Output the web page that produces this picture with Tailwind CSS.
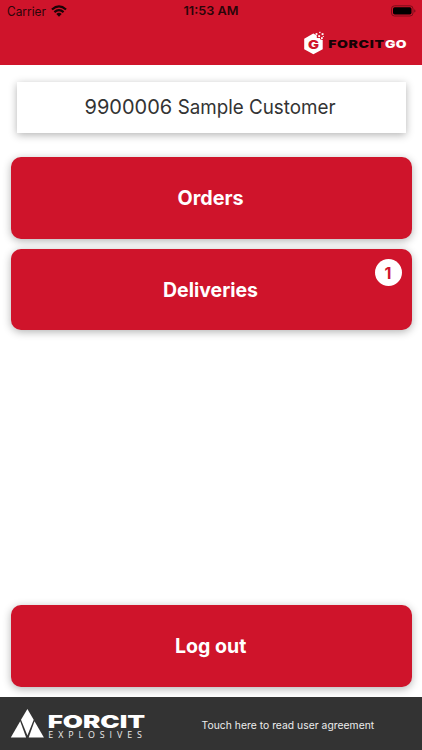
<!DOCTYPE html>
<html lang="en">
<head>
<meta charset="utf-8">
<title>Forcit GO</title>
<script src="https://cdn.jsdelivr.net/npm/@tailwindcss/browser@4"></script>
</head>
<body class="bg-white">
<div class="flex h-[750px] w-[422px] flex-col overflow-hidden bg-white font-['Inter',sans-serif]">
  <header class="h-[65px] shrink-0 bg-[#cf142b] text-[#2a0509]">
    <div class="grid h-[22px] grid-cols-3 items-center pl-[7px] pr-[6px]">
      <div class="flex items-center gap-[4px]">
        <svg class="h-4 w-[40px] overflow-visible" viewBox="0 0 40 16"><text x="0" y="12.6" font-size="12.4" fill="currentColor" textLength="39" lengthAdjust="spacingAndGlyphs">Carrier</text></svg>
        <svg class="h-[12px] w-[16px]" viewBox="0 0 15 11" fill="none" stroke="#1c0306" stroke-width="2.1"><path d="M.9 4.1Q7.5-1.7 14.1 4.1"/><path d="M3.2 6.6Q7.5 2.8 11.8 6.6"/><path d="M7.5 10.8 5 8.3Q7.5 6.2 10 8.3Z" fill="#1c0306" stroke="none"/></svg>
      </div>
      <svg class="h-4 w-[56px] justify-self-center overflow-visible" viewBox="0 0 56 16"><text x="0.4" y="12.4" font-size="12.4" font-weight="600" fill="currentColor" textLength="55" lengthAdjust="spacingAndGlyphs">11:53 AM</text></svg>
      <svg class="h-[12px] w-[26px] justify-self-end" viewBox="0 0 26 12"><rect x="1.5" y=".8" width="21.5" height="10.2" rx="3" fill="none" stroke="#7c0c1a" stroke-width="1"/><rect x="3" y="2.3" width="18.5" height="7.2" rx="1.7" fill="#000"/><path d="M24.2 4.2q1.3.5 1.3 1.7t-1.3 1.7z" fill="#7c0c1a"/></svg>
    </div>
    <div class="flex justify-end pr-[14px] pt-[7px]">
      <svg class="h-[28px] w-[105px] overflow-visible" viewBox="303 29 105 28">
        <path d="M313.3 33.5 316.8 35.5V38H320V39.2L322.7 40V49.2L313.4 54.3 304.2 49.2V38.7Z" fill="#fff"/>
        <g fill="#fff"><rect x="315.6" y="33.1" width="1.8" height="1.8"/><rect x="319.2" y="31.8" width="1.3" height="1.3"/><rect x="321.6" y="33.2" width="1.9" height="1.9"/><rect x="318.2" y="35.2" width="1.9" height="1.9"/><rect x="321" y="37.2" width="1.8" height="1.8"/><rect x="322.8" y="36" width="1" height="1"/></g>
        <text x="308" y="48.6" font-size="11.8" font-weight="900" fill="#cf142b" textLength="11" lengthAdjust="spacingAndGlyphs">G</text>
        <text x="328.2" y="48" font-size="10.7" font-weight="900" fill="#180205" textLength="56.5" lengthAdjust="spacingAndGlyphs" letter-spacing=".5">FORCIT</text>
        <text x="385" y="48" font-size="10.7" font-weight="900" fill="#fff" textLength="22" lengthAdjust="spacingAndGlyphs" letter-spacing=".3">GO</text>
      </svg>
    </div>
  </header>
  <main class="flex flex-1 flex-col px-[10.5px] pb-[10.5px] pt-[17px]">
    <div class="mx-[6px] flex h-[50.5px] items-center justify-center bg-white shadow-[0_2px_8px_rgba(0,0,0,0.3)]">
      <svg class="h-[30px] w-[254px] overflow-visible" viewBox="0 0 254 30"><text y="22" font-size="20" fill="#333"><tspan x="0.6" textLength="87.6" lengthAdjust="spacingAndGlyphs">9900006</tspan> <tspan x="93.8" textLength="66" lengthAdjust="spacingAndGlyphs">Sample</tspan> <tspan x="164.9" textLength="86.6" lengthAdjust="spacingAndGlyphs">Customer</tspan></text></svg>
    </div>
    <button class="mt-[24.5px] flex h-[81.5px] items-center justify-center rounded-[10px] bg-[#cf142b] shadow-[0_2px_8px_rgba(0,0,0,0.3)]">
      <svg class="h-[30px] w-[68px] overflow-visible" viewBox="0 0 68 30"><text x="0.6" y="22.4" font-size="20" font-weight="700" fill="#fff" textLength="66" lengthAdjust="spacingAndGlyphs">Orders</text></svg>
    </button>
    <button class="relative mt-[10.5px] flex h-[81px] items-center justify-center rounded-[10px] bg-[#cf142b] shadow-[0_2px_8px_rgba(0,0,0,0.3)]">
      <svg class="h-[30px] w-[98px] overflow-visible" viewBox="0 0 98 30"><text x="1" y="22.4" font-size="20" font-weight="700" fill="#fff" textLength="95" lengthAdjust="spacingAndGlyphs">Deliveries</text></svg>
      <span class="absolute right-[10px] top-[10px] flex size-[27px] items-center justify-center rounded-full bg-white text-[16px] font-bold leading-none text-[#cf142b]">1</span>
    </button>
    <button class="mt-auto flex h-[81.5px] items-center justify-center rounded-[10px] bg-[#cf142b] shadow-[0_2px_8px_rgba(0,0,0,0.3)]">
      <svg class="h-[30px] w-[72px] overflow-visible" viewBox="0 0 72 30"><text x="0" y="22.4" font-size="20" font-weight="700" fill="#fff" textLength="71.3" lengthAdjust="spacingAndGlyphs">Log out</text></svg>
    </button>
  </main>
  <footer class="relative flex h-[53px] shrink-0 items-center bg-[#333] pl-[10px]">
    <svg class="h-[36px] w-[136px] overflow-visible" viewBox="10 706 136 36" fill="#fff">
      <path d="M27.4 709 33.7 719.7 27.4 735.5 21 719.7Z"/><path d="M20.2 721.3 26.1 737.4H10.8Z"/><path d="M34.5 721.3 43.9 737.4H28.7Z"/>
      <text x="47.7" y="728" font-size="17.9" font-weight="900" textLength="97.5" lengthAdjust="spacingAndGlyphs">FORCIT</text>
      <text x="48.3" y="738.1" font-size="9" font-family="Open Sans, sans-serif" letter-spacing="5" textLength="98.5" lengthAdjust="spacingAndGlyphs" fill="#eee">EXPLOSIVES</text>
    </svg>
    <svg class="ml-[55px] h-[20px] w-[174px] overflow-visible" viewBox="0 0 174 20"><text x="0.6" y="15.2" font-size="10.3" fill="#ededed" textLength="172.6">Touch here to read user agreement</text></svg>
  </footer>
</div>
</body>
</html>
